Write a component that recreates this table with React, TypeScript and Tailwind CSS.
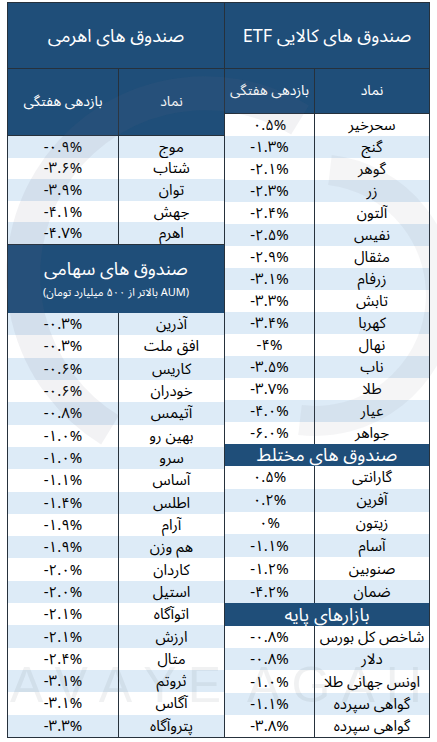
import React from "react";

type R = [string, string];

const lever: R[] = [
  ["موج", "-۰.۹%"],
  ["شتاب", "-۳.۶%"],
  ["توان", "-۳.۹%"],
  ["جهش", "-۴.۱%"],
  ["اهرم", "-۴.۷%"],
];

const stock: R[] = [
  ["آذرین", "-۰.۳%"],
  ["افق ملت", "-۰.۳%"],
  ["کاریس", "-۰.۶%"],
  ["خودران", "-۰.۶%"],
  ["آتیمس", "-۰.۸%"],
  ["بهین رو", "-۱.۰%"],
  ["سرو", "-۱.۰%"],
  ["آساس", "-۱.۱%"],
  ["اطلس", "-۱.۴%"],
  ["آرام", "-۱.۹%"],
  ["هم وزن", "-۱.۹%"],
  ["کاردان", "-۲.۰%"],
  ["استیل", "-۲.۰%"],
  ["اتوآگاه", "-۲.۱%"],
  ["ارزش", "-۲.۱%"],
  ["متال", "-۲.۴%"],
  ["ثروتم", "-۳.۱%"],
  ["آگاس", "-۳.۱%"],
  ["پتروآگاه", "-۳.۳%"],
];

const etf: R[] = [
  ["سحرخیر", "۰.۵%"],
  ["گنج", "-۱.۳%"],
  ["گوهر", "-۲.۱%"],
  ["زر", "-۲.۳%"],
  ["آلتون", "-۲.۴%"],
  ["نفیس", "-۲.۵%"],
  ["مثقال", "-۲.۹%"],
  ["زرفام", "-۳.۱%"],
  ["تابش", "-۳.۳%"],
  ["کهربا", "-۳.۴%"],
  ["نهال", "-۴%"],
  ["ناب", "-۳.۵%"],
  ["طلا", "-۳.۷%"],
  ["عیار", "-۴.۰%"],
  ["جواهر", "-۶.۰%"],
];

const mixed: R[] = [
  ["گارانتی", "۰.۵%"],
  ["آفرین", "۰.۲%"],
  ["زیتون", "۰%"],
  ["آسام", "-۱.۱%"],
  ["صنوبین", "-۱.۲%"],
  ["ضمان", "-۴.۲%"],
];

const base: R[] = [
  ["شاخص کل بورس", "-۰.۸%"],
  ["دلار", "-۰.۸%"],
  ["اونس جهانی طلا", "-۱.۰%"],
  ["گواهی سپرده", "-۱.۱%"],
  ["گواهی سپرده", "-۳.۸%"],
];

function LeftRows({ rows, lightFirst }: { rows: R[]; lightFirst: boolean }) {
  return (
    <>
      {rows.map(([n, v], i) => {
        const light = lightFirst ? i % 2 === 0 : i % 2 === 1;
        return (
          <div
            key={i}
            className={
              light
                ? "flex flex-1 min-h-0 bg-[#ddebf7]"
                : "flex flex-1 min-h-0 bg-white"
            }
          >
            <div
              dir="ltr"
              className="w-[111px] border-r border-[#26313c] flex items-center justify-center text-[15px] leading-[18px] text-black"
            >
              {v}
            </div>
            <div
              dir="rtl"
              className="flex-1 flex items-center justify-center text-[15px] leading-[18px] text-black"
            >
              {n}
            </div>
          </div>
        );
      })}
    </>
  );
}

function RightRows({ rows, lightFirst }: { rows: R[]; lightFirst: boolean }) {
  return (
    <>
      {rows.map(([n, v], i) => {
        const light = lightFirst ? i % 2 === 0 : i % 2 === 1;
        return (
          <div
            key={i}
            className={
              light
                ? "flex flex-1 min-h-0 bg-[#ddebf7]"
                : "flex flex-1 min-h-0 bg-white"
            }
          >
            <div
              dir="ltr"
              className="w-[90px] border-r border-[#26313c] flex items-center justify-center text-[15px] leading-[18px] text-black"
            >
              {v}
            </div>
            <div
              dir="rtl"
              className="flex-1 flex items-center justify-center text-[15px] leading-[18px] text-black"
            >
              {n}
            </div>
          </div>
        );
      })}
    </>
  );
}

function Watermark() {
  return (
    <div className="pointer-events-none absolute inset-0">
      <svg width="437" height="742" viewBox="0 0 437 742" className="absolute inset-0">
        <path
          d="M 300 120 A 170 170 0 0 0 110 430"
          fill="none"
          stroke="#6b7280"
          strokeOpacity="0.09"
          strokeWidth="34"
        />
        <path
          d="M 330 170 A 120 120 0 0 1 300 420"
          fill="none"
          stroke="#6b7280"
          strokeOpacity="0.07"
          strokeWidth="30"
        />
      </svg>
      <div className="absolute left-[10px] top-[660px] w-[412px] flex justify-between text-[50px] leading-[50px] text-[#6b7280]/10 font-['Liberation_Sans',sans-serif]">
        <span>A</span>
        <span>V</span>
        <span>A</span>
        <span>Y</span>
        <span>E</span>
        <span className="w-[4px]"></span>
        <span>A</span>
        <span>G</span>
        <span>A</span>
        <span>H</span>
      </div>
    </div>
  );
}

export default function App() {
  return (
    <div className="relative w-[437px] h-[742px] bg-white overflow-hidden px-[7px] pt-[2px] font-['Noto_Sans_Arabic','DejaVu_Sans',sans-serif]">
      <div className="flex h-[736px] border border-[#26313c] bg-white">
        {/* left table */}
        <div className="w-[217px] flex flex-col border-r border-[#26313c]">
          <div
            dir="rtl"
            className="h-[66px] bg-[#1f4e79] border-b border-[#26313c] flex items-center justify-center text-white text-[18px] leading-[24px]"
          >
            صندوق های اهرمی
          </div>
          <div className="h-[67px] bg-[#1f4e79] border-b border-[#26313c] flex">
            <div className="w-[111px] border-r border-[#26313c] flex items-center justify-center text-white text-[14px] leading-[18px]">
              بازدهی هفتگی
            </div>
            <div className="flex-1 flex items-center justify-center text-white text-[14px] leading-[18px]">
              نماد
            </div>
          </div>
          <div className="h-[108px] flex flex-col">
            <LeftRows rows={lever} lightFirst={true} />
          </div>
          <div className="h-[69px] bg-[#1f4e79] border-t border-[#26313c] flex flex-col items-center justify-center text-white">
            <div dir="rtl" className="text-[18px] leading-[24px]">
              صندوق های سهامی
            </div>
            <div dir="rtl" className="text-[11px] leading-[16px] mt-[4px]">
              (AUM بالاتر از ۵۰۰ میلیارد تومان)
            </div>
          </div>
          <div className="flex-1 flex flex-col">
            <LeftRows rows={stock} lightFirst={true} />
          </div>
        </div>
        {/* right table */}
        <div className="flex-1 flex flex-col">
          <div
            dir="rtl"
            className="h-[66px] bg-[#1f4e79] border-b border-[#26313c] flex items-center justify-center text-white text-[18px] leading-[24px]"
          >
            صندوق های کالایی ETF
          </div>
          <div className="h-[45px] bg-[#1f4e79] border-b border-[#26313c] flex">
            <div className="w-[90px] border-r border-[#26313c] flex items-center justify-center text-white text-[14px] leading-[18px]">
              بازدهی هفتگی
            </div>
            <div className="flex-1 flex items-center justify-center text-white text-[14px] leading-[18px]">
              نماد
            </div>
          </div>
          <div className="h-[330px] flex flex-col">
            <RightRows rows={etf} lightFirst={false} />
          </div>
          <div
            dir="rtl"
            className="h-[22px] bg-[#1f4e79] flex items-center justify-center text-white text-[18px] leading-[20px]"
          >
            صندوق های مختلط
          </div>
          <div className="h-[137px] flex flex-col">
            <RightRows rows={mixed} lightFirst={false} />
          </div>
          <div
            dir="rtl"
            className="h-[23px] bg-[#1f4e79] flex items-center justify-center text-white text-[18px] leading-[20px]"
          >
            بازارهای پایه
          </div>
          <div className="flex-1 flex flex-col">
            <RightRows rows={base} lightFirst={false} />
          </div>
        </div>
      </div>
      <Watermark />
    </div>
  );
}
